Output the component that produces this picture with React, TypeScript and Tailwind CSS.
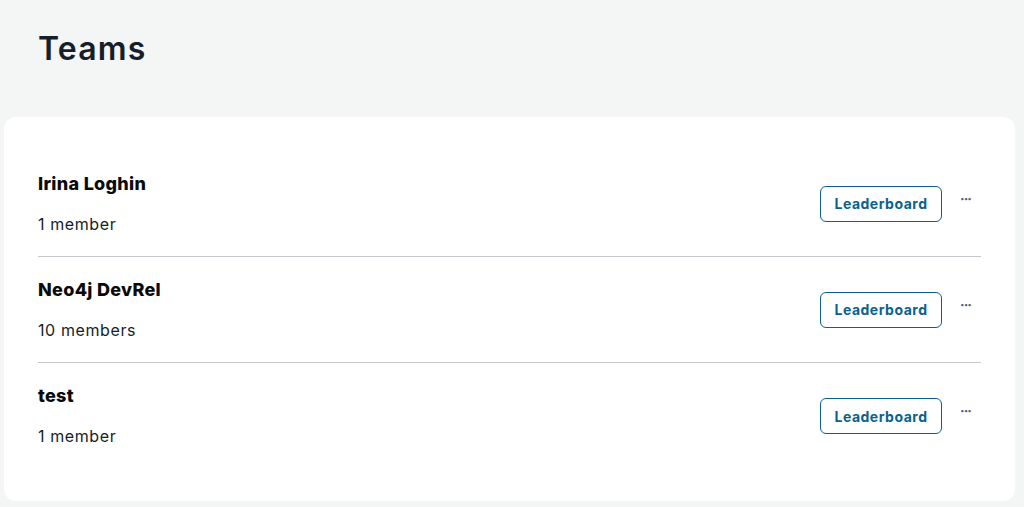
import React from "react";

const teams = [
  { name: "Irina Loghin", members: "1 member" },
  { name: "Neo4j DevRel", members: "10 members" },
  { name: "test", members: "1 member" },
];

export default function App() {
  return (
    <div className="min-h-[507px] bg-[#f4f5f5] pl-[4px] pr-[9px] pb-[6px] font-['Inter','Noto_Sans',sans-serif] text-[#151e29]">
      <div className="flex h-[117px] items-start px-[34px] pt-[27px]">
        <h1 className="text-[32px] font-semibold leading-[44px] tracking-[1.2px] text-[#151e29]">Teams</h1>
      </div>
      <div className="rounded-[12px] bg-white px-[34px] pt-[34px] pb-[32px]">
        {teams.map((t, i) => (
          <div
            key={t.name}
            className={`flex h-[106px] items-center justify-between ${i < teams.length - 1 ? "border-b border-[#c4c8cd]" : ""}`}
          >
            <div className="flex flex-col">
              <div className="text-[18px] font-extrabold leading-[24px] tracking-[0.3px] text-[#0a0a0a]">{t.name}</div>
              <div className="mt-[16px] text-[16px] leading-[24px] tracking-[0.6px] text-[#151e29]">{t.members}</div>
            </div>
            <div className="flex items-center gap-[18px] pr-[10px]">
              <button className="h-[36px] w-[122px] rounded-[6px] border border-[#0a6190] text-[14px] font-bold tracking-[0.5px] text-[#0a6190]">
                Leaderboard
              </button>
              <span className="-mt-[10px] text-[14px] font-bold leading-none tracking-[-1px] text-[#5a5f66]">···</span>
            </div>
          </div>
        ))}
      </div>
    </div>
  );
}
